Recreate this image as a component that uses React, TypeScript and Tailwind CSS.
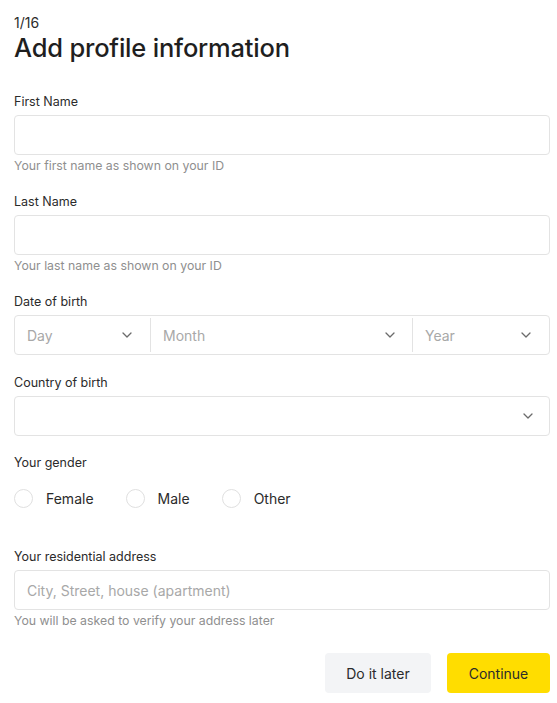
import React from "react";

const Chevron = () => (
  <svg width="10" height="6" viewBox="0 0 10 6" fill="none" className="shrink-0">
    <path d="M1 1l4 4 4-4" stroke="#6b6b6b" strokeWidth="1.3" strokeLinecap="round" strokeLinejoin="round" />
  </svg>
);

const Label = ({ children }: { children: React.ReactNode }) => (
  <div className="text-[12.5px] leading-[18px] text-[#2b2b2b] mb-[4px]">{children}</div>
);

const Hint = ({ children }: { children: React.ReactNode }) => (
  <div className="text-[12.3px] leading-[16px] text-[#8f8f8f] mt-[3px]">{children}</div>
);

const Box = ({ children, className = "" }: { children?: React.ReactNode; className?: string }) => (
  <div className={`h-[40px] border border-[#e3e3e3] rounded-[4px] bg-white ${className}`}>{children}</div>
);

const Radio = ({ label }: { label: string }) => (
  <label className="flex items-center gap-[13px] cursor-pointer">
    <span className="w-[19px] h-[19px] rounded-full border border-[#e0e0e0] bg-white" />
    <span className="text-[14px] text-[#2b2b2b]">{label}</span>
  </label>
);

export default function App() {
  return (
    <div
      className="min-h-screen bg-white pl-[14px] pr-[7px] pt-[14px]"
      style={{ fontFamily: "Inter, 'Noto Sans', sans-serif" }}
    >
      {/* Header */}
      <div className="text-[14px] leading-[18px] text-[#2b2b2b]">1/16</div>
      <h1 className="text-[25.5px] leading-[32px] font-medium text-[#1f1f1f] tracking-[-0.2px]">
        Add profile information
      </h1>

      <div className="mt-[29px] flex flex-col">
        <div>
          <Label>First Name</Label>
          <Box />
          <Hint>Your first name as shown on your ID</Hint>
        </div>

        <div className="mt-[19px]">
          <Label>Last Name</Label>
          <Box />
          <Hint>Your last name as shown on your ID</Hint>
        </div>

        <div className="mt-[19px]">
          <Label>Date of birth</Label>
          <Box className="flex items-center">
            <div className="w-[135px] flex items-center justify-between pl-[12px] pr-[18px] text-[14px] text-[#a8a8a8]">
              <span>Day</span>
              <Chevron />
            </div>
            <div className="w-px h-[34px] bg-[#e3e3e3]" />
            <div className="flex-1 flex items-center justify-between pl-[12px] pr-[17px] text-[14px] text-[#a8a8a8]">
              <span>Month</span>
              <Chevron />
            </div>
            <div className="w-px h-[34px] bg-[#e3e3e3]" />
            <div className="w-[136px] flex items-center justify-between pl-[12px] pr-[18px] text-[14px] text-[#a8a8a8]">
              <span>Year</span>
              <Chevron />
            </div>
          </Box>
        </div>

        <div className="mt-[19px]">
          <Label>Country of birth</Label>
          <Box className="flex items-center justify-end pr-[16px]">
            <Chevron />
          </Box>
        </div>

        <div className="mt-[18px]">
          <Label>Your gender</Label>
          <div className="flex items-center gap-[32px] mt-[16px]">
            <Radio label="Female" />
            <Radio label="Male" />
            <Radio label="Other" />
          </div>
        </div>

        <div className="mt-[39px]">
          <Label>Your residential address</Label>
          <Box className="flex items-center px-[12px]">
            <span className="text-[14px] text-[#a8a8a8]">City, Street, house (apartment)</span>
          </Box>
          <Hint>You will be asked to verify your address later</Hint>
        </div>

        <div className="mt-[24px] flex justify-end gap-[16px]">
          <button className="h-[40px] w-[106px] rounded-[4px] bg-[#f3f4f6] text-[14px] text-[#2b2b2b]">
            Do it later
          </button>
          <button className="h-[40px] w-[103px] rounded-[4px] bg-[#ffdd00] text-[14px] text-[#2b2b2b]">
            Continue
          </button>
        </div>
      </div>
    </div>
  );
}
